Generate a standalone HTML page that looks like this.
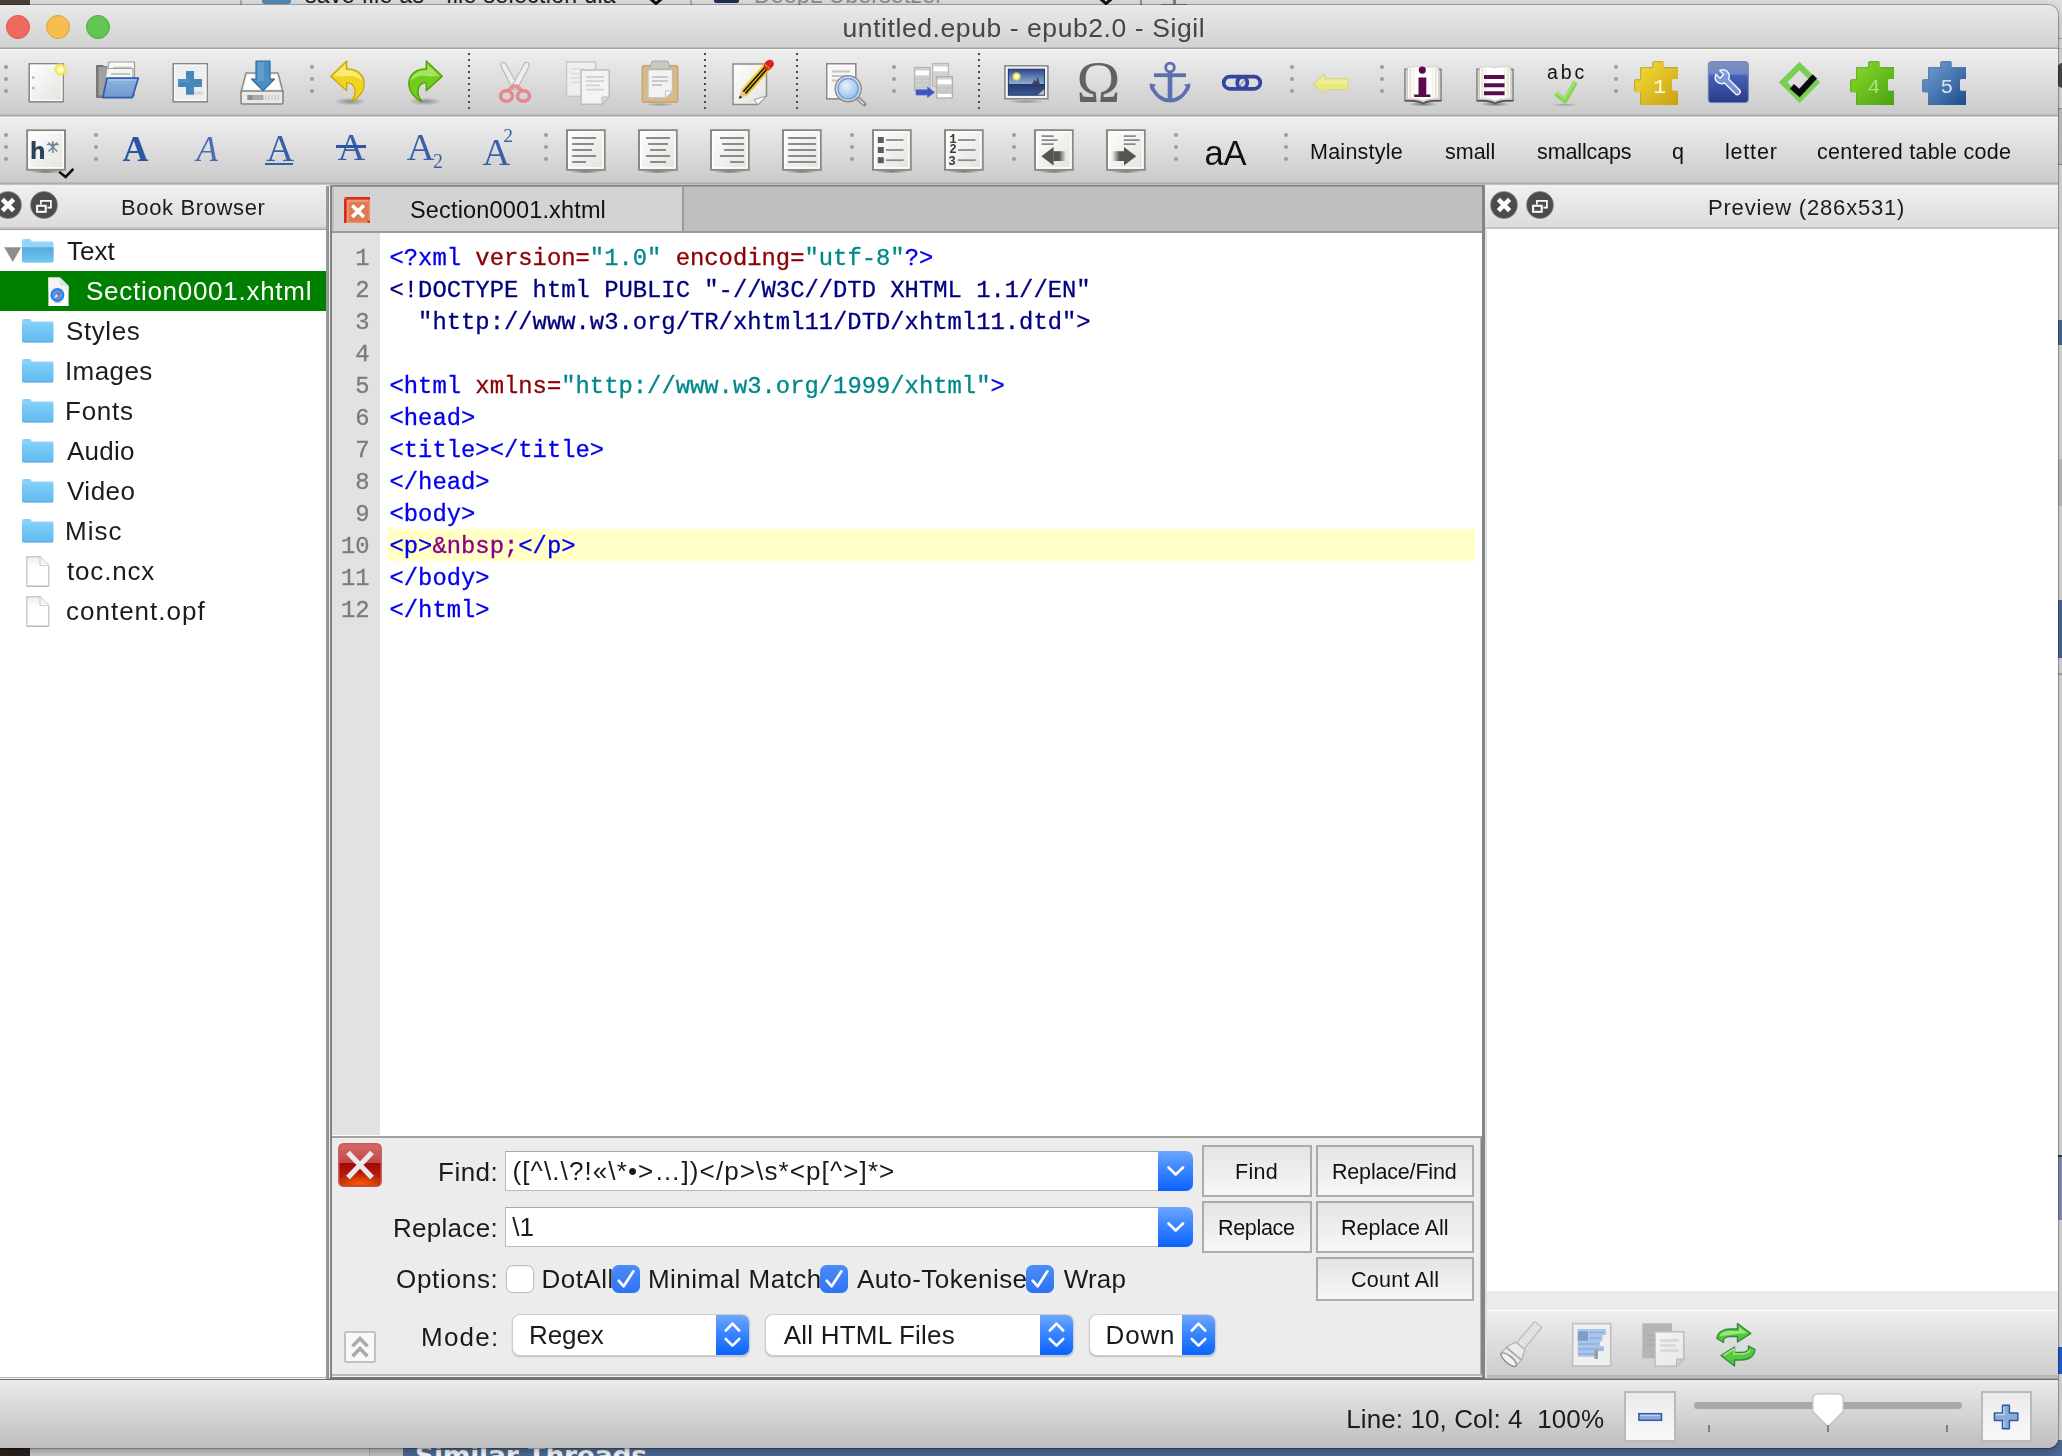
<!DOCTYPE html>
<html lang="en">
<head>
<meta charset="utf-8">
<title>untitled.epub - epub2.0 - Sigil</title>
<style>
*{box-sizing:border-box;margin:0;padding:0}
html,body{width:2062px;height:1456px;overflow:hidden}
body{position:relative;background:#e4e4e4;font-family:"Liberation Sans","DejaVu Sans",sans-serif;color:#1a1a1a}
#bgtop,#bgbot,#bgright,#win,#in,#in div,#in svg,#bgtop div,#bgbot div,#bgright div{position:absolute}
#bgtop{left:0;top:0;width:2062px;height:6px;background:#d9d9d9;overflow:hidden;border-bottom:1px solid #9c9c9c}
#bgbot{left:0;top:1440px;width:2062px;height:16px;background:#4e6c98;overflow:hidden}
#bgright{left:2048px;top:0;width:14px;height:1456px;background:#dedede;overflow:hidden}
#win{left:-12px;top:5px;width:2070px;height:1443px;border-radius:10px;overflow:hidden;background:#ececec;box-shadow:0 0 0 1px rgba(0,0,0,.25),0 4px 10px rgba(0,0,0,.3)}
#in{left:12px;top:-5px;width:2062px;height:1456px;will-change:transform}
.t{white-space:pre}
.tbar{left:0;width:2062px;background:linear-gradient(#eeeeee,#cbcbcb)}
.hl{left:0;width:2062px;height:1px}
.hdr{background:linear-gradient(#f0f0f0,#dbdbdb)}
.btn{border:2px solid #ababab;background:linear-gradient(#e4e4e4,#f7f7f7);}
.blue{background:linear-gradient(#6ea6ff,#3b86ff 45%,#0a62ff);}
.ck{width:26px;height:26px;border-radius:6px}
.ln{font-family:"Liberation Mono","DejaVu Sans Mono",monospace;white-space:pre;-webkit-text-stroke:.300px}
</style>
</head>
<body>
<div id="bgtop">
<div style="left:0;top:0;width:30px;height:6px;background:#4a4238"></div>
<div style="left:240px;top:0;width:2px;height:6px;background:#a8a8a8"></div>
<div style="left:262px;top:-14px;width:29px;height:18px;background:#4f86b4;border-radius:3px"></div>
<div class="t" style="left:305px;top:-16px;font-size:23px;line-height:23px;color:#1a1a1a;letter-spacing:.360px">save file as - file selection dia</div>
<svg style="position:absolute;left:644px;top:0" width="24" height="6"><path d="M2 -5 L12 3.600 L22 -5" fill="none" stroke="#111" stroke-width="3"/></svg>
<div style="left:690px;top:0;width:2px;height:6px;background:#a8a8a8"></div>
<div style="left:714px;top:-16px;width:25px;height:19px;background:#1c2f56;border-radius:2px"></div>
<div class="t" style="left:754px;top:-16px;font-size:23px;line-height:23px;color:#8a8a8a;letter-spacing:.200px">DeepL Übersetzer</div>
<svg style="position:absolute;left:1094px;top:0" width="24" height="6"><path d="M2 -5 L12 3.600 L22 -5" fill="none" stroke="#111" stroke-width="3"/></svg>
<div style="left:1140px;top:0;width:2px;height:6px;background:#909090"></div>
<div style="left:1172.500px;top:0;width:3px;height:5px;background:#7c7c7c"></div>
<div style="left:1161px;top:4px;width:26px;height:1px;background:#8c8c8c"></div>
</div>
<div id="bgright">
<div style="left:0;top:38px;width:14px;height:1px;background:#aaa"></div>
<div style="left:0;top:48px;width:14px;height:1px;background:#bbb"></div>
<div style="left:9px;top:63px;width:12px;height:25px;background:#4a4a4a;border-radius:6px 0 0 6px"></div>
<div style="left:0;top:108px;width:14px;height:57px;background:#c6c6c6;border-top:1px solid #999;border-bottom:1px solid #888"></div>
<div style="left:0;top:320px;width:14px;height:25px;background:#4a6a9a"></div>
<div style="left:0;top:459px;width:14px;height:47px;background:#c2c2c2"></div>
<div style="left:0;top:600px;width:14px;height:58px;background:#4a6a9a"></div>
<div style="left:0;top:673px;width:14px;height:2px;background:#aaa"></div>
<div style="left:0;top:1155px;width:14px;height:65px;background:#8594b4;border-top:2px solid #3a3a3a"></div>
<div style="left:0;top:1347px;width:14px;height:27px;background:#1f5fe0"></div>
</div>
<div id="bgbot">
<div style="left:0;top:0;width:30px;height:16px;background:#2a2420"></div>
<div style="left:30px;top:0;width:339px;height:16px;background:#cfcfcf"></div>
<div style="left:369px;top:0;width:34px;height:16px;background:#c6c6c6;border-left:1px solid #aaa"></div>
<div class="t" style="left:415px;top:3px;font-size:26.500px;line-height:26.500px;color:#fff;font-weight:bold;font-family:'DejaVu Sans','Liberation Sans',sans-serif;letter-spacing:-.200px">Similar Threads</div>
</div>
<div id="win"><div id="in">
<div style="left:0px;top:5px;width:2062px;height:43px;background:linear-gradient(#e9e9e9,#d2d2d2)"></div><div style="left:0px;top:47px;width:2062px;height:1px;background:#bdbdbd"></div><div style="left:0px;top:48px;width:2062px;height:1px;background:#a3a3a3"></div><div style="left:6px;top:15px;width:24px;height:24px;border-radius:50%;background:#ee6a5e;border:1px solid #d8574b"></div><div style="left:46px;top:15px;width:24px;height:24px;border-radius:50%;background:#f5bf4f;border:1px solid #dba43b"></div><div style="left:86px;top:15px;width:24px;height:24px;border-radius:50%;background:#62c554;border:1px solid #4daa3f"></div><div class="t" style='left:842.50px;top:15.00px;font-size:26.5px;line-height:26.5px;color:#464646;letter-spacing:0.577px;'>untitled.epub - epub2.0 - Sigil</div><div style="left:0px;top:49px;width:2062px;height:1px;background:#fafafa"></div><div class="tbar" style="left:0px;top:50px;width:2062px;height:64px;"></div><div style="left:0px;top:114px;width:2062px;height:1px;background:#bcbcbc"></div><div style="left:0px;top:115px;width:2062px;height:1px;background:#adadad"></div><div style="left:0px;top:116px;width:2062px;height:1px;background:#c4c4c4"></div><div style="left:0px;top:117px;width:2062px;height:1px;background:#fafafa"></div><div class="tbar" style="left:0px;top:118px;width:2062px;height:64px;"></div><div style="left:0px;top:182px;width:2062px;height:1px;background:#bababa"></div><div style="left:0px;top:183px;width:2062px;height:1px;background:#adadad"></div><div style="left:0px;top:184px;width:2062px;height:1px;background:#c0c0c0"></div><div class="t" style='left:1204.50px;top:136.00px;font-size:34.5px;line-height:34.5px;color:#111;letter-spacing:-0.200px;'>aA</div><div class="t" style='left:1310.00px;top:142.00px;font-size:21.5px;line-height:21.5px;color:#111;letter-spacing:0.250px;'>Mainstyle</div><div class="t" style='left:1445.00px;top:142.00px;font-size:21.5px;line-height:21.5px;color:#111;'>small</div><div class="t" style='left:1537.00px;top:142.00px;font-size:21.5px;line-height:21.5px;color:#111;letter-spacing:-0.125px;'>smallcaps</div><div class="t" style='left:1672.00px;top:142.00px;font-size:21.5px;line-height:21.5px;color:#111;'>q</div><div class="t" style='left:1725.00px;top:142.00px;font-size:21.5px;line-height:21.5px;color:#111;letter-spacing:0.800px;'>letter</div><div class="t" style='left:1817.00px;top:142.00px;font-size:21.5px;line-height:21.5px;color:#111;letter-spacing:0.278px;'>centered table code</div><div style="left:0px;top:185px;width:2062px;height:1195px;background:#ececec"></div><div class="hdr" style="left:0px;top:185px;width:329px;height:42px;"></div><div style="left:0px;top:227px;width:329px;height:2px;background:#c6c6c6"></div><div style="left:0px;top:229px;width:329px;height:1px;background:#a0a0a0"></div><div style="left:0px;top:230px;width:326px;height:1147px;background:#fff"></div><div style="left:326px;top:186px;width:3px;height:1192px;background:linear-gradient(90deg,#a2a2a2,#8a8a8a)"></div><div style="left:0px;top:1377px;width:326px;height:1px;background:#b4b4b4"></div><div style="left:329px;top:186px;width:1px;height:1192px;background:#f2f2f2"></div><div class="t" style='left:121.00px;top:197.00px;font-size:22px;line-height:22px;color:#1c1c1c;letter-spacing:0.636px;'>Book Browser</div><div style="left:0px;top:271px;width:326px;height:40px;background:#008000"></div><div class="t" style='left:67.00px;top:238.00px;font-size:26px;line-height:26px;color:#1c1c1c;'>Text</div><div class="t" style='left:86.00px;top:278.00px;font-size:26px;line-height:26px;color:#fff;letter-spacing:0.719px;'>Section0001.xhtml</div><div class="t" style='left:66.00px;top:318.00px;font-size:26px;line-height:26px;color:#1c1c1c;letter-spacing:0.600px;'>Styles</div><div class="t" style='left:65.00px;top:358.00px;font-size:26px;line-height:26px;color:#1c1c1c;letter-spacing:0.400px;'>Images</div><div class="t" style='left:65.00px;top:398.00px;font-size:26px;line-height:26px;color:#1c1c1c;letter-spacing:0.750px;'>Fonts</div><div class="t" style='left:67.00px;top:438.00px;font-size:26px;line-height:26px;color:#1c1c1c;letter-spacing:0.250px;'>Audio</div><div class="t" style='left:67.00px;top:478.00px;font-size:26px;line-height:26px;color:#1c1c1c;letter-spacing:0.500px;'>Video</div><div class="t" style='left:65.00px;top:518.00px;font-size:26px;line-height:26px;color:#1c1c1c;letter-spacing:1.000px;'>Misc</div><div class="t" style='left:67.00px;top:558.00px;font-size:26px;line-height:26px;color:#1c1c1c;letter-spacing:0.833px;'>toc.ncx</div><div class="t" style='left:66.00px;top:598.00px;font-size:26px;line-height:26px;color:#1c1c1c;letter-spacing:1.000px;'>content.opf</div><div style="left:330px;top:185px;width:1155px;height:1195px;background:#848484"></div><div style="left:332px;top:187px;width:1150px;height:44px;background:#bfbfbf"></div><div style="left:332px;top:186px;width:1150px;height:1px;background:#9a9a9a"></div><div style="left:334px;top:187px;width:350px;height:44px;background:#d3d3d3;border-right:2px solid #9b9b9b"></div><div style="left:332px;top:231px;width:1150px;height:2px;background:#9b9b9b"></div><div style="left:332px;top:233px;width:1150px;height:902px;background:#fff"></div><div style="left:332px;top:233px;width:48px;height:902px;background:#e2e2e2"></div><div class="t" style='left:410.00px;top:199.00px;font-size:23.5px;line-height:23.5px;color:#111;letter-spacing:0.156px;'>Section0001.xhtml</div><div style="left:388px;top:529px;width:1087px;height:32px;background:#ffffc6"></div><div class="ln" style="left:389.5px;top:242.5px;font-size:23.85px;line-height:32px;height:32px"><span style="color:#0000ee">&lt;?xml </span><span style="color:#8b0000">version=</span><span style="color:#00888a">"1.0"</span><span style="color:#8b0000"> encoding=</span><span style="color:#00888a">"utf-8"</span><span style="color:#0000ee">?&gt;</span></div><div class="ln" style="left:333px;width:36.6px;text-align:right;top:242.5px;font-size:23.85px;line-height:32px;height:32px;color:#7c7c7c">1</div><div class="ln" style="left:389.5px;top:274.5px;font-size:23.85px;line-height:32px;height:32px"><span style="color:#000080">&lt;!DOCTYPE html PUBLIC "-//W3C//DTD XHTML 1.1//EN"</span></div><div class="ln" style="left:333px;width:36.6px;text-align:right;top:274.5px;font-size:23.85px;line-height:32px;height:32px;color:#7c7c7c">2</div><div class="ln" style="left:389.5px;top:306.5px;font-size:23.85px;line-height:32px;height:32px"><span style="color:#000080">  "http://www.w3.org/TR/xhtml11/DTD/xhtml11.dtd"&gt;</span></div><div class="ln" style="left:333px;width:36.6px;text-align:right;top:306.5px;font-size:23.85px;line-height:32px;height:32px;color:#7c7c7c">3</div><div class="ln" style="left:389.5px;top:338.5px;font-size:23.85px;line-height:32px;height:32px"></div><div class="ln" style="left:333px;width:36.6px;text-align:right;top:338.5px;font-size:23.85px;line-height:32px;height:32px;color:#7c7c7c">4</div><div class="ln" style="left:389.5px;top:370.5px;font-size:23.85px;line-height:32px;height:32px"><span style="color:#0000ee">&lt;html </span><span style="color:#8b0000">xmlns=</span><span style="color:#00888a">"http://www.w3.org/1999/xhtml"</span><span style="color:#0000ee">&gt;</span></div><div class="ln" style="left:333px;width:36.6px;text-align:right;top:370.5px;font-size:23.85px;line-height:32px;height:32px;color:#7c7c7c">5</div><div class="ln" style="left:389.5px;top:402.5px;font-size:23.85px;line-height:32px;height:32px"><span style="color:#0000ee">&lt;head&gt;</span></div><div class="ln" style="left:333px;width:36.6px;text-align:right;top:402.5px;font-size:23.85px;line-height:32px;height:32px;color:#7c7c7c">6</div><div class="ln" style="left:389.5px;top:434.5px;font-size:23.85px;line-height:32px;height:32px"><span style="color:#0000ee">&lt;title&gt;&lt;/title&gt;</span></div><div class="ln" style="left:333px;width:36.6px;text-align:right;top:434.5px;font-size:23.85px;line-height:32px;height:32px;color:#7c7c7c">7</div><div class="ln" style="left:389.5px;top:466.5px;font-size:23.85px;line-height:32px;height:32px"><span style="color:#0000ee">&lt;/head&gt;</span></div><div class="ln" style="left:333px;width:36.6px;text-align:right;top:466.5px;font-size:23.85px;line-height:32px;height:32px;color:#7c7c7c">8</div><div class="ln" style="left:389.5px;top:498.5px;font-size:23.85px;line-height:32px;height:32px"><span style="color:#0000ee">&lt;body&gt;</span></div><div class="ln" style="left:333px;width:36.6px;text-align:right;top:498.5px;font-size:23.85px;line-height:32px;height:32px;color:#7c7c7c">9</div><div class="ln" style="left:389.5px;top:530.5px;font-size:23.85px;line-height:32px;height:32px"><span style="color:#0000ee">&lt;p&gt;</span><span style="color:#8b008b">&amp;nbsp;</span><span style="color:#0000ee">&lt;/p&gt;</span></div><div class="ln" style="left:333px;width:36.6px;text-align:right;top:530.5px;font-size:23.85px;line-height:32px;height:32px;color:#7c7c7c">10</div><div class="ln" style="left:389.5px;top:562.5px;font-size:23.85px;line-height:32px;height:32px"><span style="color:#0000ee">&lt;/body&gt;</span></div><div class="ln" style="left:333px;width:36.6px;text-align:right;top:562.5px;font-size:23.85px;line-height:32px;height:32px;color:#7c7c7c">11</div><div class="ln" style="left:389.5px;top:594.5px;font-size:23.85px;line-height:32px;height:32px"><span style="color:#0000ee">&lt;/html&gt;</span></div><div class="ln" style="left:333px;width:36.6px;text-align:right;top:594.5px;font-size:23.85px;line-height:32px;height:32px;color:#7c7c7c">12</div><div style="left:332px;top:1135px;width:1150px;height:2px;background:#fff"></div><div style="left:332px;top:1136px;width:1150px;height:2px;background:#a2a2a2"></div><div style="left:332px;top:1138px;width:1149px;height:237px;background:#ececec"></div><div style="left:1480px;top:1138px;width:1px;height:237px;background:#b5b5b5"></div><div style="left:332px;top:1374px;width:1150px;height:2px;background:#b9b9b9"></div><div style="left:332px;top:1376px;width:1150px;height:1px;background:#f4f4f4"></div><div class="t" style='left:438.00px;top:1159.00px;font-size:26px;line-height:26px;color:#1a1a1a;letter-spacing:0.500px;'>Find:</div><div class="t" style='left:393.00px;top:1215.00px;font-size:26px;line-height:26px;color:#1a1a1a;letter-spacing:0.286px;'>Replace:</div><div class="t" style='left:396.00px;top:1266.00px;font-size:26px;line-height:26px;color:#1a1a1a;letter-spacing:0.714px;'>Options:</div><div class="t" style='left:421.00px;top:1324.00px;font-size:26px;line-height:26px;color:#1a1a1a;letter-spacing:1.250px;'>Mode:</div><div style="left:505px;top:1151px;width:660px;height:40px;background:#fff;border:1px solid #b9b9b9;border-top-color:#a9a9a9"></div><div class="blue" style="left:1158px;top:1151px;width:35px;height:40px;border-radius:0 7px 7px 0"></div><svg style="left:1158px;top:1151px" width="35" height="40"><path d="M10.5 16.5 L17.7 23.5 L25 16.5" fill="none" stroke="#fff" stroke-width="2.6" stroke-linecap="round" stroke-linejoin="round"/></svg><div style="left:505px;top:1207px;width:660px;height:40px;background:#fff;border:1px solid #b9b9b9;border-top-color:#a9a9a9"></div><div class="blue" style="left:1158px;top:1207px;width:35px;height:40px;border-radius:0 7px 7px 0"></div><svg style="left:1158px;top:1207px" width="35" height="40"><path d="M10.5 16.5 L17.7 23.5 L25 16.5" fill="none" stroke="#fff" stroke-width="2.6" stroke-linecap="round" stroke-linejoin="round"/></svg><div class="t" style='left:512.50px;top:1158.00px;font-size:26px;line-height:26px;color:#1a1a1a;letter-spacing:1.107px;'>([^\.\?!«\*•&gt;…])&lt;/p&gt;\s*&lt;p[^&gt;]*&gt;</div><div class="t" style='left:512.30px;top:1214.00px;font-size:26px;line-height:26px;color:#1a1a1a;'>\1</div><div class="btn" style="left:1202px;top:1145px;width:110px;height:52px;"></div><div class="t" style='left:1235.00px;top:1162.00px;font-size:21.5px;line-height:21.5px;color:#111;letter-spacing:0.333px;'>Find</div><div class="btn" style="left:1316px;top:1145px;width:158px;height:52px;"></div><div class="t" style='left:1332.00px;top:1162.00px;font-size:21.5px;line-height:21.5px;color:#111;letter-spacing:-0.182px;'>Replace/Find</div><div class="btn" style="left:1202px;top:1201px;width:110px;height:52px;"></div><div class="t" style='left:1218.00px;top:1218.00px;font-size:21.5px;line-height:21.5px;color:#111;letter-spacing:-0.333px;'>Replace</div><div class="btn" style="left:1316px;top:1201px;width:158px;height:52px;"></div><div class="t" style='left:1341.00px;top:1218.00px;font-size:21.5px;line-height:21.5px;color:#111;'>Replace All</div><div class="btn" style="left:1316px;top:1257px;width:158px;height:44px;"></div><div class="t" style='left:1351.00px;top:1270.00px;font-size:21.5px;line-height:21.5px;color:#111;letter-spacing:0.250px;'>Count All</div><div style="left:506.3px;top:1265.3px;width:27.5px;height:27.5px;border-radius:6.500px;background:#fff;border:1px solid #b9b9b9;box-shadow:inset 0 1px 1px rgba(0,0,0,.06)"></div><div style="left:612.3px;top:1265.3px;width:27.8px;height:27.5px;border-radius:6.500px;background:linear-gradient(#4b8df8,#2f72f2)"></div><svg style="left:612.3px;top:1265.300px" width="28" height="28"><path d="M6.700 15.700 L11.700 21.300 L21.400 6.300" fill="none" stroke="#fff" stroke-width="2.700" stroke-linecap="round" stroke-linejoin="round"/></svg><div style="left:820px;top:1265.3px;width:27.8px;height:27.5px;border-radius:6.500px;background:linear-gradient(#4b8df8,#2f72f2)"></div><svg style="left:820px;top:1265.300px" width="28" height="28"><path d="M6.700 15.700 L11.700 21.300 L21.400 6.300" fill="none" stroke="#fff" stroke-width="2.700" stroke-linecap="round" stroke-linejoin="round"/></svg><div style="left:1026.2px;top:1265.3px;width:27.8px;height:27.5px;border-radius:6.500px;background:linear-gradient(#4b8df8,#2f72f2)"></div><svg style="left:1026.2px;top:1265.300px" width="28" height="28"><path d="M6.700 15.700 L11.700 21.300 L21.400 6.300" fill="none" stroke="#fff" stroke-width="2.700" stroke-linecap="round" stroke-linejoin="round"/></svg><div class="t" style='left:541.60px;top:1266.00px;font-size:26px;line-height:26px;color:#1a1a1a;letter-spacing:0.480px;'>DotAll</div><div class="t" style='left:647.90px;top:1266.00px;font-size:26px;line-height:26px;color:#1a1a1a;letter-spacing:0.483px;'>Minimal Match</div><div class="t" style='left:857.00px;top:1266.00px;font-size:26px;line-height:26px;color:#1a1a1a;letter-spacing:0.442px;'>Auto-Tokenise</div><div class="t" style='left:1063.70px;top:1266.00px;font-size:26px;line-height:26px;color:#1a1a1a;letter-spacing:0.200px;'>Wrap</div><div style="left:513.4px;top:1315.4px;width:235.7px;height:39.6px;border-radius:7px;background:#fff;box-shadow:0 0 0 1px #cdcdcd,0 1.500px 1.500px .500px #bdbdbd"></div><div class="blue" style="left:716.0999999999999px;top:1315px;width:33.4px;height:40.2px;border-radius:0 7px 7px 0"></div><svg style="left:716.0999999999999px;top:1315px" width="34" height="41"><path d="M9.800 15.500 L16.500 8.700 L23.200 15.500 M9.800 24 L16.500 30.700 L23.200 24" fill="none" stroke="#fff" stroke-width="2.600" stroke-linecap="round" stroke-linejoin="round"/></svg><div class="t" style='left:529.10px;top:1322.00px;font-size:26px;line-height:26px;color:#1a1a1a;letter-spacing:-0.125px;'>Regex</div><div style="left:765.6px;top:1315.4px;width:307.3px;height:39.6px;border-radius:7px;background:#fff;box-shadow:0 0 0 1px #cdcdcd,0 1.500px 1.500px .500px #bdbdbd"></div><div class="blue" style="left:1039.9px;top:1315px;width:33.4px;height:40.2px;border-radius:0 7px 7px 0"></div><svg style="left:1039.9px;top:1315px" width="34" height="41"><path d="M9.800 15.500 L16.500 8.700 L23.200 15.500 M9.800 24 L16.500 30.700 L23.200 24" fill="none" stroke="#fff" stroke-width="2.600" stroke-linecap="round" stroke-linejoin="round"/></svg><div class="t" style='left:783.70px;top:1322.00px;font-size:26px;line-height:26px;color:#1a1a1a;letter-spacing:0.231px;'>All HTML Files</div><div style="left:1089.6px;top:1315.4px;width:125px;height:39.6px;border-radius:7px;background:#fff;box-shadow:0 0 0 1px #cdcdcd,0 1.500px 1.500px .500px #bdbdbd"></div><div class="blue" style="left:1181.6px;top:1315px;width:33.4px;height:40.2px;border-radius:0 7px 7px 0"></div><svg style="left:1181.6px;top:1315px" width="34" height="41"><path d="M9.800 15.500 L16.500 8.700 L23.200 15.500 M9.800 24 L16.500 30.700 L23.200 24" fill="none" stroke="#fff" stroke-width="2.600" stroke-linecap="round" stroke-linejoin="round"/></svg><div class="t" style='left:1105.50px;top:1322.00px;font-size:26px;line-height:26px;color:#1a1a1a;letter-spacing:0.867px;'>Down</div><div class="hdr" style="left:1485px;top:185px;width:577px;height:42px;"></div><div style="left:1485px;top:227px;width:577px;height:2px;background:#c6c6c6"></div><div style="left:1487px;top:229px;width:575px;height:1062px;background:#fff"></div><div style="left:1485px;top:229px;width:2px;height:1150px;background:#e0e0e0"></div><div style="left:1487px;top:1291px;width:575px;height:20px;background:#ebebeb"></div><div style="left:1487px;top:1310px;width:575px;height:1px;background:#fafafa"></div><div style="left:1487px;top:1311px;width:575px;height:64px;background:linear-gradient(#eeeeee,#cdcdcd)"></div><div style="left:1487px;top:1375px;width:575px;height:3px;background:#b8b8b8"></div><div class="t" style='left:1708.00px;top:197.00px;font-size:22px;line-height:22px;color:#1c1c1c;letter-spacing:0.812px;'>Preview (286x531)</div><div style="left:0px;top:1378px;width:326px;height:1px;background:#f2f2f2"></div><div style="left:326px;top:1378px;width:4px;height:1px;background:#9a9a9a"></div><div style="left:330px;top:1377px;width:1155px;height:2px;background:#767676"></div><div style="left:1485px;top:1378px;width:577px;height:1px;background:#a4a4a4"></div><div style="left:0px;top:1379px;width:2062px;height:1px;background:#6c6c6c"></div><div style="left:0px;top:1380px;width:2062px;height:70px;background:linear-gradient(#ebebeb,#bcbcbc)"></div><div class="t" style='left:1346.30px;top:1406.00px;font-size:26px;line-height:26px;color:#1c1c1c;letter-spacing:0.090px;'>Line: 10, Col: 4  100%</div><svg width="0" height="0" style="left:0;top:0"><defs>
<linearGradient id="gPaper" x1="0" y1="0" x2="1" y2="1"><stop offset="0" stop-color="#ffffff"/><stop offset="1" stop-color="#e2e2de"/></linearGradient>
<linearGradient id="gPaperD" x1="0" y1="0" x2="1" y2="1"><stop offset="0" stop-color="#f6f6f6"/><stop offset="1" stop-color="#e6e6e6"/></linearGradient>
<linearGradient id="gFolder" x1="0" y1="0" x2="0" y2="1"><stop offset="0" stop-color="#8fb4e0"/><stop offset="1" stop-color="#6f98d0"/></linearGradient>
<linearGradient id="gYel" x1="0" y1="0" x2="1" y2="1"><stop offset="0" stop-color="#f6e23a"/><stop offset="1" stop-color="#c9a010"/></linearGradient>
<linearGradient id="gGrn" x1="0" y1="0" x2="1" y2="1"><stop offset="0" stop-color="#8ae02c"/><stop offset="1" stop-color="#4aa010"/></linearGradient>
<linearGradient id="gBlu" x1="0" y1="0" x2="1" y2="1"><stop offset="0" stop-color="#78a4d8"/><stop offset="1" stop-color="#1c4c8c"/></linearGradient>
<linearGradient id="gWr" x1="0" y1="0" x2="0" y2="1"><stop offset="0" stop-color="#8090bc"/><stop offset=".3" stop-color="#6f86c4"/><stop offset=".34" stop-color="#4463b8"/><stop offset="1" stop-color="#2a3888"/></linearGradient>
<linearGradient id="gSky" x1="0" y1="0" x2="0" y2="1"><stop offset="0" stop-color="#2c4a8c"/><stop offset=".55" stop-color="#8ea8d4"/><stop offset=".56" stop-color="#22376a"/><stop offset="1" stop-color="#3c5a96"/></linearGradient>
<linearGradient id="gFadeL" x1="0" y1="0" x2="1" y2="0"><stop offset="0" stop-color="#555650"/><stop offset=".45" stop-color="#555650"/><stop offset="1" stop-color="#555650" stop-opacity="0"/></linearGradient>
<linearGradient id="gFadeR" x1="1" y1="0" x2="0" y2="0"><stop offset="0" stop-color="#555650"/><stop offset=".45" stop-color="#555650"/><stop offset="1" stop-color="#555650" stop-opacity="0"/></linearGradient>
<linearGradient id="gFold" x1="0" y1="0" x2="0" y2="1"><stop offset="0" stop-color="#86d2f9"/><stop offset="1" stop-color="#62baef"/></linearGradient>
<radialGradient id="gShadow" cx=".5" cy=".5" r=".5"><stop offset="0" stop-color="#000" stop-opacity=".45"/><stop offset="1" stop-color="#000" stop-opacity="0"/></radialGradient>
<radialGradient id="gGlow" cx=".5" cy=".5" r=".5"><stop offset="0" stop-color="#fffef0"/><stop offset=".35" stop-color="#fffbb0"/><stop offset=".7" stop-color="#f2e04a" stop-opacity=".9"/><stop offset="1" stop-color="#f2e04a" stop-opacity="0"/></radialGradient>
<radialGradient id="gLens" cx=".4" cy=".35" r=".7"><stop offset="0" stop-color="#e8f2fc"/><stop offset="1" stop-color="#8fbcee"/></radialGradient>
<linearGradient id="gRedX" x1="0" y1="0" x2="0" y2="1"><stop offset="0" stop-color="#d86868"/><stop offset=".45" stop-color="#c04848"/><stop offset=".46" stop-color="#a00808"/><stop offset="1" stop-color="#c83010"/></linearGradient>
<radialGradient id="gRedGlow" cx=".5" cy="1" r=".6"><stop offset="0" stop-color="#ff5a00"/><stop offset="1" stop-color="#ff5a00" stop-opacity="0"/></radialGradient>
</defs></svg><svg style="left:2.8px;top:64px;" width="6" height="30" viewBox="0 0 6 30"><circle cx="3" cy="3" r="2" fill="#9c9c9c"/><circle cx="3" cy="15" r="2" fill="#9c9c9c"/><circle cx="3" cy="27" r="2" fill="#9c9c9c"/></svg><svg style="left:308.8px;top:64px;" width="6" height="30" viewBox="0 0 6 30"><circle cx="3" cy="3" r="2" fill="#9c9c9c"/><circle cx="3" cy="15" r="2" fill="#9c9c9c"/><circle cx="3" cy="27" r="2" fill="#9c9c9c"/></svg><svg style="left:890.8px;top:64px;" width="6" height="30" viewBox="0 0 6 30"><circle cx="3" cy="3" r="2" fill="#9c9c9c"/><circle cx="3" cy="15" r="2" fill="#9c9c9c"/><circle cx="3" cy="27" r="2" fill="#9c9c9c"/></svg><svg style="left:1288.8px;top:64px;" width="6" height="30" viewBox="0 0 6 30"><circle cx="3" cy="3" r="2" fill="#9c9c9c"/><circle cx="3" cy="15" r="2" fill="#9c9c9c"/><circle cx="3" cy="27" r="2" fill="#9c9c9c"/></svg><svg style="left:1378.8px;top:64px;" width="6" height="30" viewBox="0 0 6 30"><circle cx="3" cy="3" r="2" fill="#9c9c9c"/><circle cx="3" cy="15" r="2" fill="#9c9c9c"/><circle cx="3" cy="27" r="2" fill="#9c9c9c"/></svg><svg style="left:1613px;top:64px;" width="6" height="30" viewBox="0 0 6 30"><circle cx="3" cy="3" r="2" fill="#9c9c9c"/><circle cx="3" cy="15" r="2" fill="#9c9c9c"/><circle cx="3" cy="27" r="2" fill="#9c9c9c"/></svg><svg style="left:2.8px;top:132px;" width="6" height="30" viewBox="0 0 6 30"><circle cx="3" cy="3" r="2" fill="#9c9c9c"/><circle cx="3" cy="15" r="2" fill="#9c9c9c"/><circle cx="3" cy="27" r="2" fill="#9c9c9c"/></svg><svg style="left:93px;top:132px;" width="6" height="30" viewBox="0 0 6 30"><circle cx="3" cy="3" r="2" fill="#9c9c9c"/><circle cx="3" cy="15" r="2" fill="#9c9c9c"/><circle cx="3" cy="27" r="2" fill="#9c9c9c"/></svg><svg style="left:542.9px;top:132px;" width="6" height="30" viewBox="0 0 6 30"><circle cx="3" cy="3" r="2" fill="#9c9c9c"/><circle cx="3" cy="15" r="2" fill="#9c9c9c"/><circle cx="3" cy="27" r="2" fill="#9c9c9c"/></svg><svg style="left:848.9px;top:132px;" width="6" height="30" viewBox="0 0 6 30"><circle cx="3" cy="3" r="2" fill="#9c9c9c"/><circle cx="3" cy="15" r="2" fill="#9c9c9c"/><circle cx="3" cy="27" r="2" fill="#9c9c9c"/></svg><svg style="left:1010.6px;top:132px;" width="6" height="30" viewBox="0 0 6 30"><circle cx="3" cy="3" r="2" fill="#9c9c9c"/><circle cx="3" cy="15" r="2" fill="#9c9c9c"/><circle cx="3" cy="27" r="2" fill="#9c9c9c"/></svg><svg style="left:1172.8px;top:132px;" width="6" height="30" viewBox="0 0 6 30"><circle cx="3" cy="3" r="2" fill="#9c9c9c"/><circle cx="3" cy="15" r="2" fill="#9c9c9c"/><circle cx="3" cy="27" r="2" fill="#9c9c9c"/></svg><svg style="left:1282.8px;top:132px;" width="6" height="30" viewBox="0 0 6 30"><circle cx="3" cy="3" r="2" fill="#9c9c9c"/><circle cx="3" cy="15" r="2" fill="#9c9c9c"/><circle cx="3" cy="27" r="2" fill="#9c9c9c"/></svg><svg style="left:468px;top:53px;" width="2" height="58" viewBox="0 0 2 58"><rect x="0" y="0" width="2" height="2" fill="#4c4c4c"/><rect x="0" y="6" width="2" height="2" fill="#4c4c4c"/><rect x="0" y="12" width="2" height="2" fill="#4c4c4c"/><rect x="0" y="18" width="2" height="2" fill="#4c4c4c"/><rect x="0" y="24" width="2" height="2" fill="#4c4c4c"/><rect x="0" y="30" width="2" height="2" fill="#4c4c4c"/><rect x="0" y="36" width="2" height="2" fill="#4c4c4c"/><rect x="0" y="42" width="2" height="2" fill="#4c4c4c"/><rect x="0" y="48" width="2" height="2" fill="#4c4c4c"/><rect x="0" y="54" width="2" height="2" fill="#4c4c4c"/></svg><svg style="left:704px;top:53px;" width="2" height="58" viewBox="0 0 2 58"><rect x="0" y="0" width="2" height="2" fill="#4c4c4c"/><rect x="0" y="6" width="2" height="2" fill="#4c4c4c"/><rect x="0" y="12" width="2" height="2" fill="#4c4c4c"/><rect x="0" y="18" width="2" height="2" fill="#4c4c4c"/><rect x="0" y="24" width="2" height="2" fill="#4c4c4c"/><rect x="0" y="30" width="2" height="2" fill="#4c4c4c"/><rect x="0" y="36" width="2" height="2" fill="#4c4c4c"/><rect x="0" y="42" width="2" height="2" fill="#4c4c4c"/><rect x="0" y="48" width="2" height="2" fill="#4c4c4c"/><rect x="0" y="54" width="2" height="2" fill="#4c4c4c"/></svg><svg style="left:796px;top:53px;" width="2" height="58" viewBox="0 0 2 58"><rect x="0" y="0" width="2" height="2" fill="#4c4c4c"/><rect x="0" y="6" width="2" height="2" fill="#4c4c4c"/><rect x="0" y="12" width="2" height="2" fill="#4c4c4c"/><rect x="0" y="18" width="2" height="2" fill="#4c4c4c"/><rect x="0" y="24" width="2" height="2" fill="#4c4c4c"/><rect x="0" y="30" width="2" height="2" fill="#4c4c4c"/><rect x="0" y="36" width="2" height="2" fill="#4c4c4c"/><rect x="0" y="42" width="2" height="2" fill="#4c4c4c"/><rect x="0" y="48" width="2" height="2" fill="#4c4c4c"/><rect x="0" y="54" width="2" height="2" fill="#4c4c4c"/></svg><svg style="left:978px;top:53px;" width="2" height="58" viewBox="0 0 2 58"><rect x="0" y="0" width="2" height="2" fill="#4c4c4c"/><rect x="0" y="6" width="2" height="2" fill="#4c4c4c"/><rect x="0" y="12" width="2" height="2" fill="#4c4c4c"/><rect x="0" y="18" width="2" height="2" fill="#4c4c4c"/><rect x="0" y="24" width="2" height="2" fill="#4c4c4c"/><rect x="0" y="30" width="2" height="2" fill="#4c4c4c"/><rect x="0" y="36" width="2" height="2" fill="#4c4c4c"/><rect x="0" y="42" width="2" height="2" fill="#4c4c4c"/><rect x="0" y="48" width="2" height="2" fill="#4c4c4c"/><rect x="0" y="54" width="2" height="2" fill="#4c4c4c"/></svg><svg style="left:27px;top:61px;" width="40" height="44" viewBox="0 0 40 44"><rect x="2.2" y="2.8" width="34" height="38" fill="url(#gPaper)" stroke="#8b8b85" stroke-width="1.6"/>
<rect x="3.6" y="4.2" width="31.2" height="35.2" fill="none" stroke="#fff" stroke-width="1.2"/>
<rect x="5" y="15.400" width="2.400" height="2.400" fill="#b5b5b0"/><rect x="5" y="25.800" width="2.400" height="2.400" fill="#b5b5b0"/>
<circle cx="33.6" cy="8.6" r="7.2" fill="url(#gGlow)"/></svg><svg style="left:94px;top:59px;" width="50" height="44" viewBox="0 0 50 44"><path d="M2.600 6.500 L2.600 38.500 L9 38.500 L9 6.500 Z" fill="#8a8a88" stroke="#6e6e6c" stroke-width="1"/>
<path d="M4 7.500 L12 7.500 L14 10 L40 10 L40 37 L4 37 Z" fill="#a0a09c" stroke="#77777a" stroke-width="1.200"/>
<path d="M15 3 L40.5 3 L40.5 24 L11 24 Z" fill="#fafafa" stroke="#9a9a96" stroke-width="1.2"/>
<rect x="19" y="7.6" width="19" height="2" fill="#c4c4c0"/>
<path d="M13 9.5 L39 9.5 L39 26 L10.5 26 Z" fill="#f4f4f2" stroke="#a2a29e" stroke-width="1.1"/>
<rect x="17" y="14" width="19" height="2" fill="#c4c4c0"/>
<path d="M12.900 19.200 L44.300 19.200 L38.300 38.600 L8.800 38.600 Z" fill="url(#gFolder)" stroke="#2f5cad" stroke-width="1.700" stroke-linejoin="round"/>
<path d="M14.500 21 L42.500 21" stroke="#b4ccee" stroke-width="1.200"/></svg><svg style="left:171px;top:61px;" width="40" height="44" viewBox="0 0 40 44"><rect x="2.2" y="2.8" width="34" height="38" fill="#eceef0" stroke="#8b8b85" stroke-width="1.6"/>
<rect x="3.6" y="4.2" width="31.2" height="35.2" fill="none" stroke="#fbfbfb" stroke-width="1.2"/>
<rect x="22" y="30.6" width="10" height="3" fill="#d5d5d5"/>
<path d="M15 10.100 H23 V18 H30.900 V26.100 H23 V33.700 H15 V26.100 H7.100 V18 H15 Z" fill="#4487b8"/>
<path d="M15 10.100 H19 V18 H7.100 V22 H19 V10.100 Z" fill="#5b9ccb" opacity=".45"/></svg><svg style="left:238px;top:59px;" width="48" height="48" viewBox="0 0 48 48"><path d="M8 14 L40 14 L45 33 L3 33 Z" fill="#f2f2f2" stroke="#8b8b87" stroke-width="1.5" stroke-linejoin="round"/>
<path d="M9.5 16 L38.5 16 L42 30 L6 30 Z" fill="#fdfdfd"/>
<rect x="3" y="32" width="42" height="13" rx="1.5" fill="#e9e9e9" stroke="#858581" stroke-width="1.6"/>
<rect x="9.5" y="36" width="16" height="5" fill="#a9a9a9"/>
<rect x="9.5" y="36" width="5" height="5" fill="#8e8e8e"/>
<path d="M28 36 V41 M31 36 V41 M34 36 V41 M37 36 V41 M40 36 V41" stroke="#c4c4c4" stroke-width="1.2"/>
<path d="M18 2 H32 V20 H36.5 L25 31.5 L13.5 20 H18 Z" fill="#4a8fc4" stroke="#2f6a9c" stroke-width="1.2" stroke-linejoin="round"/>
<path d="M19.5 3 H26 V22 H19.5 Z" fill="#74acd8" opacity=".55"/></svg><svg style="left:328px;top:59px;" width="42" height="48" viewBox="0 0 42 48"><ellipse cx="22" cy="42.500" rx="16" ry="4" fill="url(#gShadow)" opacity=".75"/>
<path d="M2.700 17.200 L18.700 1.900 L18.700 9.900 C28 9.500 36.200 15 36.200 24.500 C36.200 32 31 39 23.100 42.600 C26.200 38.800 27.800 34.500 26.800 30 C25.800 26 22.800 23.600 18.700 23.600 L18.700 31.700 Z" fill="#f0d520" stroke="#c9a900" stroke-width="1.300" stroke-linejoin="round"/>
<path d="M5.500 17 L17.400 5.600 L17.400 11.300 C26 10.800 33 15 34.400 22 C29 16.200 22 15.800 15 17.600 Z" fill="#fbf29a" opacity=".75"/></svg><svg style="left:404.7px;top:59px;" width="42" height="48" viewBox="0 0 42 48"><ellipse cx="20" cy="42.500" rx="16" ry="4" fill="url(#gShadow)" opacity=".75"/>
<g transform="translate(40 0) scale(-1 1)"><path d="M2.700 17.200 L18.700 1.900 L18.700 9.900 C28 9.500 36.200 15 36.200 24.500 C36.200 32 31 39 23.100 42.600 C26.200 38.800 27.800 34.500 26.800 30 C25.800 26 22.800 23.600 18.700 23.600 L18.700 31.700 Z" fill="#72cc1c" stroke="#4aa000" stroke-width="1.300" stroke-linejoin="round"/>
<path d="M5.500 17 L17.400 5.600 L17.400 11.300 C26 10.800 33 15 34.400 22 C29 16.200 22 15.800 15 17.600 Z" fill="#b8f078" opacity=".7"/></g></svg><svg style="left:496px;top:59px;" width="40" height="48" viewBox="0 0 40 48"><path d="M6.500 3.500 C5 4 4.500 6 5.500 8.500 L17.500 31 L22 27 L9.500 4.500 C8.500 3.200 7.500 3.100 6.500 3.500 Z" fill="#ededed" stroke="#bcbcbc" stroke-width="1.300"/>
<path d="M31.500 3.500 C33 4 33.500 6 32.500 8.500 L20.500 31 L16 27 L28.500 4.500 C29.500 3.200 30.500 3.100 31.500 3.500 Z" fill="#efefef" stroke="#bcbcbc" stroke-width="1.300"/>
<path d="M17.500 27 L12.500 31.500 M20.500 27 L25.500 31.500" stroke="#e69292" stroke-width="3.800" stroke-linecap="round"/>
<ellipse cx="10.500" cy="37" rx="6" ry="5.200" fill="none" stroke="#e28a8a" stroke-width="3.600"/>
<ellipse cx="27.500" cy="37" rx="6" ry="5.200" fill="none" stroke="#e28a8a" stroke-width="3.600"/></svg><svg style="left:564px;top:59px;" width="48" height="48" viewBox="0 0 48 48"><rect x="2.600" y="2.800" width="29" height="34.500" fill="#efefef" stroke="#c6c6c6" stroke-width="1.400"/>
<path d="M7 10 H20 M7 14.500 H20 M7 19 H20 M7 23.500 H18" stroke="#dcdcdc" stroke-width="1.600"/>
<path d="M17 11 H45.200 V38 L38 45.200 H17 Z" fill="#f3f3f3" stroke="#bdbdbd" stroke-width="1.500"/>
<path d="M45 38 L38 38 L38 45 Z" fill="#d8d8d8" stroke="#bdbdbd" stroke-width="1"/>
<path d="M22 18 H40 M22 22.200 H40 M22 26.400 H36 M22 30.600 H40" stroke="#d2d2d2" stroke-width="1.800"/></svg><svg style="left:640px;top:59px;" width="42" height="48" viewBox="0 0 42 48"><ellipse cx="20" cy="45.500" rx="15" ry="1.800" fill="url(#gShadow)" opacity=".6"/>
<rect x="2.300" y="6.800" width="35.400" height="36.500" rx="1.500" fill="#d9b983" stroke="#c6a46c" stroke-width="1.400"/>
<path d="M8 10.500 H32.500 V32 L25.500 39 H8 Z" fill="#f2f2f2" stroke="#bebebe" stroke-width="1.300"/>
<path d="M32.500 32 L25.500 32 L25.500 39 Z" fill="#fafafa" stroke="#c4c4c4" stroke-width="1"/>
<path d="M12.500 2.200 H27.500 L29.500 6 V10 H10.500 V6 Z" fill="#c9c9c1" stroke="#b0b0a8" stroke-width="1.200" stroke-linejoin="round"/>
<path d="M12 18 H28 M12 22 H28 M12 26 H22" stroke="#c8c8c8" stroke-width="1.800"/></svg><svg style="left:730px;top:59px;" width="44" height="48" viewBox="0 0 44 48"><path d="M3 5 H36.500 V37 L28 45.500 H3 Z" fill="url(#gPaper)" stroke="#8c8c88" stroke-width="1.500"/>
<path d="M36.500 37 L24 40.500 L28 45.500 Z" fill="#fff" stroke="#9c9c98" stroke-width="1"/>
<path d="M11.140 30.920 L34.270 4.670 L40.570 10.230 L17.440 36.480 Z" fill="#f2c218"/>
<path d="M15.340 34.630 L38.470 8.380 M13.240 32.780 L36.370 6.530" stroke="#1a1a1a" stroke-width="1.700"/>
<path d="M11.800 30.400 L34.800 4.300" stroke="#f8dc60" stroke-width="1.200"/>
<path d="M9 39.700 L11.140 30.920 L17.440 36.480 Z" fill="#e6c48c"/>
<path d="M9 39.700 L9.780 36.390 L12.180 38.510 Z" fill="#111"/>
<path d="M37.750 7.080 L39.740 4.830" stroke="#dc2020" stroke-width="8.400" stroke-linecap="round"/>
<path d="M35 5.300 L40 9.700" stroke="#c89a10" stroke-width="1.200"/></svg><svg style="left:824px;top:61px;" width="44" height="46" viewBox="0 0 44 46"><rect x="2.800" y="2.800" width="29" height="35" fill="#f6f6f6" stroke="#8b8b87" stroke-width="1.600"/>
<rect x="4.400" y="4.400" width="25.800" height="31.800" fill="none" stroke="#fff" stroke-width="1.200"/>
<path d="M8 10.500 H26 M8 15 H26 M8 19.500 H16" stroke="#c4c4c4" stroke-width="1.800"/>
<path d="M33.500 37 L40.200 43.200" stroke="#8a8a8a" stroke-width="4.400" stroke-linecap="round"/>
<path d="M34.500 38 L39.700 42.800" stroke="#d6d6d6" stroke-width="1.600" stroke-linecap="round"/>
<circle cx="24.200" cy="27.700" r="13" fill="#e4e4e4" stroke="#8e8e8e" stroke-width="1.500"/>
<circle cx="24.200" cy="27.700" r="10.200" fill="url(#gLens)" stroke="#6fa0de" stroke-width="1.500"/></svg><svg style="left:912px;top:61px;" width="44" height="40" viewBox="0 0 44 40"><rect x="2.500" y="6.500" width="15.500" height="23" fill="#cfcfcf" stroke="#b4b4b4" stroke-width="1.200"/>
<rect x="3.500" y="9.500" width="13.500" height="4.800" fill="#fff"/>
<path d="M3.500 18 H17 M3.500 22 H17 M3.500 26 H17" stroke="#c8c8c8" stroke-width="2"/>
<rect x="20.500" y="2.500" width="16" height="23" fill="#d2d2d2" stroke="#b8b8b8" stroke-width="1.200"/>
<rect x="21.500" y="5.500" width="14" height="4.800" fill="#fff"/>
<rect x="24.500" y="15.500" width="16" height="21.500" fill="#cdcdcd" stroke="#b0b0b0" stroke-width="1.200"/>
<rect x="25.500" y="18.500" width="14" height="4.800" fill="#fff"/>
<rect x="25.500" y="33" width="14" height="3.200" fill="#fff"/>
<path d="M25.500 27 H39.500 M25.500 30.500 H39.500" stroke="#c6c6c6" stroke-width="1.800"/>
<path d="M4 28.800 H15.500 V26 L22.500 31.300 L15.500 36.600 V34 H4 Z" fill="#3a55c0" stroke="#5a70cc" stroke-width=".800"/></svg><svg style="left:1002px;top:63px;" width="50" height="42" viewBox="0 0 50 42"><ellipse cx="24" cy="38.500" rx="20" ry="2" fill="url(#gShadow)" opacity=".7"/>
<rect x="2.900" y="2.800" width="43" height="33" fill="#f2f2f2" stroke="#8b8b87" stroke-width="1.600"/>
<rect x="6.400" y="6.200" width="36" height="26" fill="url(#gSky)" stroke="#1c2f66" stroke-width="1"/>
<circle cx="14.500" cy="13.500" r="4.800" fill="url(#gGlow)"/>
<path d="M29.500 22 L32.500 16.500 L34 19 L35.800 14 L38.200 22 Z" fill="#38425a"/>
<path d="M36.500 31.800 L42 26.500 V31.800 Z" fill="#cfcfcf" stroke="#9a9a9a" stroke-width=".8"/></svg><svg style="left:1147px;top:60px;" width="46" height="46" viewBox="0 0 46 46"><g fill="none" stroke="#5c70ae" stroke-linecap="butt">
<circle cx="23" cy="7.400" r="4.300" stroke-width="2.800"/>
<path d="M23 11.500 V41" stroke-width="4.600"/>
<path d="M7 15.200 H39" stroke-width="3.800"/>
<path d="M4.500 25.500 C8.500 37 17 40.500 23 40.500 C29 40.500 37.500 37 41.500 25.500" stroke-width="3.800"/>
</g><path d="M2.400 23.500 L8.800 24.500 L4.200 31 Z M43.600 23.500 L37.200 24.500 L41.800 31 Z" fill="#5c70ae"/></svg><svg style="left:1219px;top:72px;" width="46" height="22" viewBox="0 0 46 22"><g fill="none" stroke="#3444a0" stroke-width="3.700">
<rect x="4.700" y="4.600" width="23.600" height="12.200" rx="6.100"/>
<rect x="18.200" y="4.600" width="23.100" height="12.200" rx="6.100"/></g>
<path d="M20.800 14 L25.800 7.600" stroke="#9aa4d0" stroke-width="1.600"/></svg><svg style="left:1310px;top:70px;" width="42" height="28" viewBox="0 0 42 28"><path d="M3.200 13.800 L14.500 3.800 V8.500 H38 V19.500 H14.500 V24 Z" fill="#eaea7c" stroke="#d8d4a0" stroke-width="1.200" stroke-linejoin="round"/>
<path d="M6 13.500 L13.500 7 V10 H37 V13.500 Z" fill="#f4f4a8" opacity=".7"/></svg><svg style="left:1402px;top:64px;" width="42" height="44" viewBox="0 0 42 44"><ellipse cx="21" cy="40.200" rx="15" ry="2.400" fill="url(#gShadow)"/>
<path d="M2.900 5.200 H39.100 V36.800 C33 36.400 26 36.900 21 39.400 C16 36.900 9 36.400 2.900 36.800 Z" fill="#d4d4ce" stroke="#868686" stroke-width="1.500"/>
<path d="M2.900 36.800 C9 36.400 16 36.900 21 39.400 C26 36.900 33 36.400 39.100 36.800" fill="none" stroke="#55554f" stroke-width="1.600"/>
<path d="M5.600 3.400 C11 2.600 17 2.600 21 3.600 C25 2.600 31 2.600 36.400 3.400 V35 C31 34.400 25 35 21 37.200 C17 35 11 34.400 5.600 35 Z" fill="#ffffff" stroke="#c4c4bc" stroke-width=".800"/>
<path d="M8.300 4 V34.300 M33.700 4 V34.300" stroke="#e6e2d0" stroke-width="2"/><path d="M11.500 3.600 V34.200 M30.500 3.600 V34.200" stroke="#f0eee2" stroke-width="1.400"/><circle cx="20.300" cy="6.100" r="3.600" fill="#5a0a4e"/><path d="M16.500 13.500 H24.300 V30.500 H28.400 V33 H12.200 V30.500 H16.500 Z" fill="#5a0a4e"/></svg><svg style="left:1474px;top:64px;" width="42" height="44" viewBox="0 0 42 44"><ellipse cx="21" cy="40.200" rx="15" ry="2.400" fill="url(#gShadow)"/>
<path d="M2.900 5.200 H39.100 V36.800 C33 36.400 26 36.900 21 39.400 C16 36.900 9 36.400 2.900 36.800 Z" fill="#d4d4ce" stroke="#868686" stroke-width="1.500"/>
<path d="M2.900 36.800 C9 36.400 16 36.900 21 39.400 C26 36.900 33 36.400 39.100 36.800" fill="none" stroke="#55554f" stroke-width="1.600"/>
<path d="M5.600 3.400 C11 2.600 17 2.600 21 3.600 C25 2.600 31 2.600 36.400 3.400 V35 C31 34.400 25 35 21 37.200 C17 35 11 34.400 5.600 35 Z" fill="#ffffff" stroke="#c4c4bc" stroke-width=".800"/>
<path d="M8.300 4 V34.300 M33.700 4 V34.300" stroke="#e6e2d0" stroke-width="2"/><path d="M11.500 3.600 V34.200 M30.500 3.600 V34.200" stroke="#f0eee2" stroke-width="1.400"/><path d="M10 13 H30.500 M10 21.200 H30.500 M10 29.300 H30.500" stroke="#5a0a4e" stroke-width="4"/></svg><div class="t" style='left:1547.00px;top:63.00px;font-size:19.5px;line-height:19.5px;color:#111;letter-spacing:2.950px;'>abc</div><svg style="left:1548px;top:78px;" width="36" height="30" viewBox="0 0 36 30"><ellipse cx="17" cy="26.800" rx="13" ry="1.600" fill="url(#gShadow)" opacity=".6"/>
<path d="M8 15.300 L16.800 22.900 L27.500 4" fill="none" stroke="#86d64e" stroke-width="5.200" stroke-linejoin="round" stroke-linecap="butt"/>
<path d="M9 14.600 L16.500 20.800 L26.500 3.800" fill="none" stroke="#b4ec88" stroke-width="1.400" opacity=".8"/></svg><svg style="left:1633px;top:59px;" width="48" height="48" viewBox="0 0 48 48"><path d="M7.200 8.200 H19.200 V3.700 Q19.200 2.200 20.700 2.200 H29.300 Q30.800 2.200 30.800 3.700 V8.200 H45 V20 H40.500 Q39 20 39 21.500 V30.200 Q39 31.700 40.500 31.700 H45 V46 H7.200 V33.600 H2.700 Q1.200 33.600 1.200 32.100 V21.800 Q1.200 20.300 2.700 20.300 H7.200 Z" fill="url(#gYel)"/>
<path d="M7.700 33.600 V46 M7.700 20.300 V8.700 H19.700 V3.700 Q19.700 2.700 20.700 2.700 H29.300 Q30.300 2.700 30.300 3.700 M30.800 8.700 H45 M1.700 32.100 V21.800 Q1.700 20.800 2.700 20.800 H7.200" fill="none" stroke="#a89a38" stroke-width="1" opacity=".8"/></svg><svg style="left:1849px;top:59px;" width="48" height="48" viewBox="0 0 48 48"><path d="M7.200 8.200 H19.200 V3.700 Q19.200 2.200 20.700 2.200 H29.300 Q30.800 2.200 30.800 3.700 V8.200 H45 V20 H40.500 Q39 20 39 21.500 V30.200 Q39 31.700 40.500 31.700 H45 V46 H7.200 V33.600 H2.700 Q1.200 33.600 1.200 32.100 V21.800 Q1.200 20.300 2.700 20.300 H7.200 Z" fill="url(#gGrn)"/>
<path d="M7.700 33.600 V46 M7.700 20.300 V8.700 H19.700 V3.700 Q19.700 2.700 20.700 2.700 H29.300 Q30.300 2.700 30.300 3.700 M30.800 8.700 H45 M1.700 32.100 V21.800 Q1.700 20.800 2.700 20.800 H7.200" fill="none" stroke="#5a9a28" stroke-width="1" opacity=".8"/></svg><svg style="left:1921px;top:59px;" width="48" height="48" viewBox="0 0 48 48"><path d="M7.200 8.200 H19.200 V3.700 Q19.200 2.200 20.700 2.200 H29.300 Q30.800 2.200 30.800 3.700 V8.200 H45 V20 H40.500 Q39 20 39 21.500 V30.200 Q39 31.700 40.500 31.700 H45 V46 H7.200 V33.600 H2.700 Q1.200 33.600 1.200 32.100 V21.800 Q1.200 20.300 2.700 20.300 H7.200 Z" fill="url(#gBlu)"/>
<path d="M7.700 33.600 V46 M7.700 20.300 V8.700 H19.700 V3.700 Q19.700 2.700 20.700 2.700 H29.300 Q30.300 2.700 30.300 3.700 M30.800 8.700 H45 M1.700 32.100 V21.800 Q1.700 20.800 2.700 20.800 H7.200" fill="none" stroke="#4a6e9c" stroke-width="1" opacity=".8"/></svg><div class="t" style='left:1653.20px;top:77.00px;font-size:21px;line-height:21px;color:#fffef0;font-family:"Liberation Mono","DejaVu Sans Mono",monospace;'>1</div><div class="t" style='left:1867.60px;top:77.00px;font-size:21px;line-height:21px;color:#b8e890;font-family:"Liberation Mono","DejaVu Sans Mono",monospace;opacity:.85;'>4</div><div class="t" style='left:1940.60px;top:77.00px;font-size:21px;line-height:21px;color:#d4e2f4;font-family:"Liberation Mono","DejaVu Sans Mono",monospace;'>5</div><svg style="left:1707px;top:60px;" width="44" height="44" viewBox="0 0 44 44"><rect x="1.300" y="1.600" width="40" height="41" rx="3" fill="url(#gWr)" stroke="#7683b2" stroke-width="1"/>
<g transform="rotate(-45 21 22.500)"><path d="M18.400 8.200 V13.700 H23.600 V8.200 C27 9.400 28.600 12.200 28.200 15.200 C27.800 17.800 26 19.600 23.800 20.400 V35.700 C23.800 37.400 22.600 38.400 21 38.400 C19.400 38.400 18.200 37.400 18.200 35.700 V20.400 C16 19.600 14.200 17.800 13.800 15.200 C13.400 12.200 15 9.400 18.400 8.200 Z" fill="#8fa6e0" fill-opacity=".75" stroke="#eef2fc" stroke-width="1.500" stroke-linejoin="round"/></g></svg><svg style="left:1778px;top:60px;" width="46" height="46" viewBox="0 0 46 46"><rect x="9.900" y="10.700" width="23.200" height="23.200" transform="rotate(45 21.500 22.300)" fill="none" stroke="#78d052" stroke-width="6"/>
<path d="M13.900 26.300 L21.500 33 L36.800 16.400" fill="none" stroke="#0c0c0c" stroke-width="6.200"/></svg><div class="t" style='left:1076.50px;top:53.00px;font-size:59px;line-height:59px;color:#626262;font-family:"Liberation Serif","DejaVu Serif",serif;'>Ω</div><svg style="left:565px;top:128px;" width="42" height="48" viewBox="0 0 42 48"><ellipse cx="21.0" cy="43.400" rx="17.0" ry="2.200" fill="url(#gShadow)"/>
<rect x="2" y="2.200" width="37.7" height="39.600" fill="url(#gPaper)" stroke="#8a8a82" stroke-width="2"/>
<rect x="3.800" y="4" width="34.1" height="36" fill="none" stroke="#fff" stroke-width="1.500"/><path d="M7.2 10 H31" stroke="#8b8b8b" stroke-width="2"/><path d="M7.2 16 H28.8" stroke="#8b8b8b" stroke-width="2"/><path d="M7.2 22 H27" stroke="#8b8b8b" stroke-width="2"/><path d="M7.2 28 H31" stroke="#8b8b8b" stroke-width="2"/><path d="M7.2 34 H21" stroke="#8b8b8b" stroke-width="2"/></svg><svg style="left:637px;top:128px;" width="42" height="48" viewBox="0 0 42 48"><ellipse cx="21.0" cy="43.400" rx="17.0" ry="2.200" fill="url(#gShadow)"/>
<rect x="2" y="2.200" width="37.7" height="39.600" fill="url(#gPaper)" stroke="#8a8a82" stroke-width="2"/>
<rect x="3.800" y="4" width="34.1" height="36" fill="none" stroke="#fff" stroke-width="1.500"/><path d="M9 10 H33" stroke="#8b8b8b" stroke-width="2"/><path d="M11.2 16 H30.9" stroke="#8b8b8b" stroke-width="2"/><path d="M13.1 22 H29" stroke="#8b8b8b" stroke-width="2"/><path d="M9 28 H33" stroke="#8b8b8b" stroke-width="2"/><path d="M13.1 34 H29" stroke="#8b8b8b" stroke-width="2"/></svg><svg style="left:709px;top:128px;" width="42" height="48" viewBox="0 0 42 48"><ellipse cx="21.0" cy="43.400" rx="17.0" ry="2.200" fill="url(#gShadow)"/>
<rect x="2" y="2.200" width="37.7" height="39.600" fill="url(#gPaper)" stroke="#8a8a82" stroke-width="2"/>
<rect x="3.800" y="4" width="34.1" height="36" fill="none" stroke="#fff" stroke-width="1.500"/><path d="M11 10 H35" stroke="#8b8b8b" stroke-width="2"/><path d="M13.1 16 H35" stroke="#8b8b8b" stroke-width="2"/><path d="M15.2 22 H35" stroke="#8b8b8b" stroke-width="2"/><path d="M11 28 H35" stroke="#8b8b8b" stroke-width="2"/><path d="M21.1 34 H35" stroke="#8b8b8b" stroke-width="2"/></svg><svg style="left:781px;top:128px;" width="42" height="48" viewBox="0 0 42 48"><ellipse cx="21.0" cy="43.400" rx="17.0" ry="2.200" fill="url(#gShadow)"/>
<rect x="2" y="2.200" width="37.7" height="39.600" fill="url(#gPaper)" stroke="#8a8a82" stroke-width="2"/>
<rect x="3.800" y="4" width="34.1" height="36" fill="none" stroke="#fff" stroke-width="1.500"/><path d="M7.2 10 H35" stroke="#8b8b8b" stroke-width="2"/><path d="M7.2 16 H35" stroke="#8b8b8b" stroke-width="2"/><path d="M7.2 22 H35" stroke="#8b8b8b" stroke-width="2"/><path d="M7.2 28 H35" stroke="#8b8b8b" stroke-width="2"/><path d="M7.2 34 H35" stroke="#8b8b8b" stroke-width="2"/></svg><svg style="left:871.4px;top:128px;" width="42" height="48" viewBox="0 0 42 48"><ellipse cx="21.0" cy="43.400" rx="17.0" ry="2.200" fill="url(#gShadow)"/>
<rect x="2" y="2.200" width="37.7" height="39.600" fill="url(#gPaper)" stroke="#8a8a82" stroke-width="2"/>
<rect x="3.800" y="4" width="34.1" height="36" fill="none" stroke="#fff" stroke-width="1.500"/><rect x="6.800" y="9" width="6" height="6" fill="#5c5c5c"/><path d="M15 12 H32.600" stroke="#8b8b8b" stroke-width="1.800"/><rect x="6.800" y="19" width="6" height="6" fill="#5c5c5c"/><path d="M15 22 H32.600" stroke="#8b8b8b" stroke-width="1.800"/><rect x="6.800" y="29.200000000000003" width="6" height="6" fill="#5c5c5c"/><path d="M15 32.2 H32.600" stroke="#8b8b8b" stroke-width="1.800"/></svg><svg style="left:943.4px;top:128px;" width="42" height="48" viewBox="0 0 42 48"><ellipse cx="21.0" cy="43.400" rx="17.0" ry="2.200" fill="url(#gShadow)"/>
<rect x="2" y="2.200" width="37.7" height="39.600" fill="url(#gPaper)" stroke="#8a8a82" stroke-width="2"/>
<rect x="3.800" y="4" width="34.1" height="36" fill="none" stroke="#fff" stroke-width="1.500"/><path d="M15 12 H32.600" stroke="#8b8b8b" stroke-width="1.800"/><path d="M15 22 H32.600" stroke="#8b8b8b" stroke-width="1.800"/><path d="M15 32.2 H32.600" stroke="#8b8b8b" stroke-width="1.800"/></svg><div class="t" style='left:949.30px;top:134.00px;font-size:12.5px;line-height:12.5px;color:#3c3c3c;font-family:"Liberation Mono","DejaVu Sans Mono",monospace;font-weight:bold;'>1</div><div class="t" style='left:949.30px;top:144.00px;font-size:12.5px;line-height:12.5px;color:#3c3c3c;font-family:"Liberation Mono","DejaVu Sans Mono",monospace;font-weight:bold;'>2</div><div class="t" style='left:948.30px;top:156.00px;font-size:12.5px;line-height:12.5px;color:#3c3c3c;font-family:"Liberation Mono","DejaVu Sans Mono",monospace;font-weight:bold;'>3</div><svg style="left:1033.3px;top:128px;" width="42" height="48" viewBox="0 0 42 48"><ellipse cx="21.0" cy="43.400" rx="17.0" ry="2.200" fill="url(#gShadow)"/>
<rect x="2" y="2.200" width="37.7" height="39.600" fill="url(#gPaper)" stroke="#8a8a82" stroke-width="2"/>
<rect x="3.800" y="4" width="34.1" height="36" fill="none" stroke="#fff" stroke-width="1.500"/><path d="M8.600 8.200 H20.700 M8.600 12.100 H24.600 M8.600 16.200 H20.700" stroke="#8b8b8b" stroke-width="1.800"/><path d="M20.500 23.200 H33 V33 H20.500 Z" fill="url(#gFadeL)"/><path d="M8.400 28.200 L20.600 19 V37.400 Z" fill="#555650"/></svg><svg style="left:1105.3px;top:128px;" width="42" height="48" viewBox="0 0 42 48"><ellipse cx="21.0" cy="43.400" rx="17.0" ry="2.200" fill="url(#gShadow)"/>
<rect x="2" y="2.200" width="37.7" height="39.600" fill="url(#gPaper)" stroke="#8a8a82" stroke-width="2"/>
<rect x="3.800" y="4" width="34.1" height="36" fill="none" stroke="#fff" stroke-width="1.500"/><path d="M18.700 8.200 H30.700 M18.700 12.100 H34.700 M18.700 16.200 H30.700" stroke="#8b8b8b" stroke-width="1.800"/><path d="M7 23.200 H21 V33 H7 Z" fill="url(#gFadeR)"/><path d="M31.200 28.200 L19 19 V37.400 Z" fill="#555650"/></svg><svg style="left:25px;top:128px;" width="54" height="54" viewBox="0 0 54 54"><ellipse cx="21" cy="43.600" rx="17" ry="2.200" fill="url(#gShadow)"/>
<rect x="2.200" y="2.300" width="37.800" height="39.400" fill="url(#gPaper)" stroke="#8a8a80" stroke-width="2"/>
<rect x="4" y="4.100" width="34.200" height="35.800" fill="none" stroke="#fff" stroke-width="1.500"/>
<path d="M21.800 16.500 H33.800 M27.800 13.200 V25 M23.500 14.500 L32.200 23.500 M32.200 14.500 L23.500 23.500" stroke="#6e8698" stroke-width="1.500"/>
<path d="M34.200 43.800 L40.600 49 L48.400 40.800" fill="none" stroke="#111" stroke-width="2.600"/></svg><div class="t" style='left:29.80px;top:140.00px;font-size:22.5px;line-height:22.5px;color:#2a4358;font-family:"DejaVu Sans","Liberation Sans",sans-serif;font-weight:bold;'>h</div><div class="t" style='left:122.60px;top:131.00px;font-size:36px;line-height:36px;color:#2b55a2;font-family:"Liberation Serif","DejaVu Serif",serif;font-weight:bold;'>A</div><div class="t" style='left:196.60px;top:132.00px;font-size:35px;line-height:35px;color:#4a6cb0;font-family:"Liberation Serif","DejaVu Serif",serif;font-style:italic;'>A</div><div class="t" style='left:266.20px;top:129.00px;font-size:38.5px;line-height:38.5px;color:#3a5fa8;font-family:"Liberation Serif","DejaVu Serif",serif;'>A</div><div style="left:264.5px;top:162.8px;width:28.5px;height:2.2px;background:#3a5fa8"></div><div class="t" style='left:337.50px;top:128.00px;font-size:38.5px;line-height:38.5px;color:#3a5fa8;font-family:"Liberation Serif","DejaVu Serif",serif;'>A</div><div style="left:336px;top:145.2px;width:29.5px;height:2.4px;background:#2b55a2"></div><div class="t" style='left:406.80px;top:128.00px;font-size:38.5px;line-height:38.5px;color:#3a5fa8;font-family:"Liberation Serif","DejaVu Serif",serif;'>A</div><div class="t" style='left:433.00px;top:151.00px;font-size:20px;line-height:20px;color:#3a5fa8;font-family:"Liberation Serif","DejaVu Serif",serif;'>2</div><div class="t" style='left:482.40px;top:133.00px;font-size:38.5px;line-height:38.5px;color:#3a5fa8;font-family:"Liberation Serif","DejaVu Serif",serif;'>A</div><div class="t" style='left:503.20px;top:126.00px;font-size:19.5px;line-height:19.5px;color:#3a5fa8;font-family:"Liberation Serif","DejaVu Serif",serif;'>2</div><svg style="left:-6.1px;top:191px;" width="28" height="28" viewBox="0 0 28 28"><circle cx="14" cy="14" r="13.300" fill="#4c4c4c"/><circle cx="14" cy="14" r="13.300" fill="none" stroke="#6a6a6a" stroke-width="1.200" opacity=".6"/><path d="M8.400 8.400 L19.600 19.600 M19.600 8.400 L8.400 19.600" stroke="#fff" stroke-width="4.400"/></svg><svg style="left:29.9px;top:191px;" width="28" height="28" viewBox="0 0 28 28"><circle cx="14" cy="14" r="13.300" fill="#4c4c4c"/><circle cx="14" cy="14" r="13.300" fill="none" stroke="#6a6a6a" stroke-width="1.200" opacity=".6"/><path d="M10.900 13.600 V9.800 H20.900 V16.600 H17.400" fill="none" stroke="#fff" stroke-width="1.700"/><rect x="7.100" y="14.800" width="8.600" height="6" fill="none" stroke="#fff" stroke-width="2"/></svg><svg style="left:1490px;top:191px;" width="28" height="28" viewBox="0 0 28 28"><circle cx="14" cy="14" r="13.300" fill="#4c4c4c"/><circle cx="14" cy="14" r="13.300" fill="none" stroke="#6a6a6a" stroke-width="1.200" opacity=".6"/><path d="M8.400 8.400 L19.600 19.600 M19.600 8.400 L8.400 19.600" stroke="#fff" stroke-width="4.400"/></svg><svg style="left:1526px;top:191px;" width="28" height="28" viewBox="0 0 28 28"><circle cx="14" cy="14" r="13.300" fill="#4c4c4c"/><circle cx="14" cy="14" r="13.300" fill="none" stroke="#6a6a6a" stroke-width="1.200" opacity=".6"/><path d="M10.900 13.600 V9.800 H20.900 V16.600 H17.400" fill="none" stroke="#fff" stroke-width="1.700"/><rect x="7.100" y="14.800" width="8.600" height="6" fill="none" stroke="#fff" stroke-width="2"/></svg><svg width="0" height="0" style="left:0;top:0"><defs><linearGradient id="gFoldO" x1="0" y1="0" x2="0" y2="1"><stop offset="0" stop-color="#58a8dc"/><stop offset=".5" stop-color="#64b8e8"/><stop offset="1" stop-color="#72c8f4"/></linearGradient><linearGradient id="gFile" x1="0" y1="0" x2="0" y2="1"><stop offset="0" stop-color="#ececec"/><stop offset=".35" stop-color="#ffffff"/></linearGradient></defs></svg><svg style="left:21px;top:238px;" width="34" height="27" viewBox="0 0 34 27"><path d="M1 3 C1 1.800 1.800 1 3 1 H9.200 L11 3.400 H30.500 C31.700 3.400 32.500 4.200 32.500 5.400 V22.500 C32.500 23.700 31.700 24.500 30.500 24.500 H3 C1.800 24.500 1 23.700 1 22.500 Z" fill="#93d4f8"/><path d="M1 9.200 H32.500 V22.500 C32.500 23.700 31.700 24.500 30.500 24.500 H3 C1.800 24.500 1 23.700 1 22.500 Z" fill="url(#gFoldO)"/></svg><svg style="left:21px;top:318px;" width="34" height="27" viewBox="0 0 34 27"><path d="M1 3 C1 1.800 1.800 1 3 1 H9.200 L11 3.400 H30.500 C31.700 3.400 32.500 4.200 32.500 5.400 V22.500 C32.500 23.700 31.700 24.500 30.500 24.500 H3 C1.800 24.500 1 23.700 1 22.500 Z" fill="url(#gFold)"/><path d="M1 4.200 H32.500" stroke="#a4dcfa" stroke-width="1" opacity=".7"/><path d="M1.500 24 H32" stroke="#4fa6dc" stroke-width="1" opacity=".6"/></svg><svg style="left:21px;top:358px;" width="34" height="27" viewBox="0 0 34 27"><path d="M1 3 C1 1.800 1.800 1 3 1 H9.200 L11 3.400 H30.500 C31.700 3.400 32.500 4.200 32.500 5.400 V22.500 C32.500 23.700 31.700 24.500 30.500 24.500 H3 C1.800 24.500 1 23.700 1 22.500 Z" fill="url(#gFold)"/><path d="M1 4.200 H32.500" stroke="#a4dcfa" stroke-width="1" opacity=".7"/><path d="M1.500 24 H32" stroke="#4fa6dc" stroke-width="1" opacity=".6"/></svg><svg style="left:21px;top:398px;" width="34" height="27" viewBox="0 0 34 27"><path d="M1 3 C1 1.800 1.800 1 3 1 H9.200 L11 3.400 H30.500 C31.700 3.400 32.500 4.200 32.500 5.400 V22.500 C32.500 23.700 31.700 24.500 30.500 24.500 H3 C1.800 24.500 1 23.700 1 22.500 Z" fill="url(#gFold)"/><path d="M1 4.200 H32.500" stroke="#a4dcfa" stroke-width="1" opacity=".7"/><path d="M1.500 24 H32" stroke="#4fa6dc" stroke-width="1" opacity=".6"/></svg><svg style="left:21px;top:438px;" width="34" height="27" viewBox="0 0 34 27"><path d="M1 3 C1 1.800 1.800 1 3 1 H9.200 L11 3.400 H30.500 C31.700 3.400 32.500 4.200 32.500 5.400 V22.500 C32.500 23.700 31.700 24.500 30.500 24.500 H3 C1.800 24.500 1 23.700 1 22.500 Z" fill="url(#gFold)"/><path d="M1 4.200 H32.500" stroke="#a4dcfa" stroke-width="1" opacity=".7"/><path d="M1.500 24 H32" stroke="#4fa6dc" stroke-width="1" opacity=".6"/></svg><svg style="left:21px;top:478px;" width="34" height="27" viewBox="0 0 34 27"><path d="M1 3 C1 1.800 1.800 1 3 1 H9.200 L11 3.400 H30.500 C31.700 3.400 32.500 4.200 32.500 5.400 V22.500 C32.500 23.700 31.700 24.500 30.500 24.500 H3 C1.800 24.500 1 23.700 1 22.500 Z" fill="url(#gFold)"/><path d="M1 4.200 H32.500" stroke="#a4dcfa" stroke-width="1" opacity=".7"/><path d="M1.500 24 H32" stroke="#4fa6dc" stroke-width="1" opacity=".6"/></svg><svg style="left:21px;top:518px;" width="34" height="27" viewBox="0 0 34 27"><path d="M1 3 C1 1.800 1.800 1 3 1 H9.200 L11 3.400 H30.500 C31.700 3.400 32.500 4.200 32.500 5.400 V22.500 C32.500 23.700 31.700 24.500 30.500 24.500 H3 C1.800 24.500 1 23.700 1 22.500 Z" fill="url(#gFold)"/><path d="M1 4.200 H32.500" stroke="#a4dcfa" stroke-width="1" opacity=".7"/><path d="M1.500 24 H32" stroke="#4fa6dc" stroke-width="1" opacity=".6"/></svg><svg style="left:3px;top:246px;" width="20" height="17" viewBox="0 0 20 17"><path d="M1.200 1.300 H18.200 L9.800 16 Z" fill="#8e8e8e"/></svg><svg style="left:26.2px;top:555.5px;" width="23.5" height="31" viewBox="0 0 23.5 31"><path d="M.800 .800 H14.0 L22.7 9.5 V30.2 H.800 Z" fill="url(#gFile)" stroke="#c9c9c9" stroke-width="1.400"/><path d="M14.0 .800 V9.5 H22.7" fill="#f6f6f6" stroke="#cfcfcf" stroke-width="1.200"/><path d="M1 30.3 H22.5" stroke="#b9b9b9" stroke-width="1.200"/></svg><svg style="left:26.2px;top:595.5px;" width="23.5" height="31" viewBox="0 0 23.5 31"><path d="M.800 .800 H14.0 L22.7 9.5 V30.2 H.800 Z" fill="url(#gFile)" stroke="#c9c9c9" stroke-width="1.400"/><path d="M14.0 .800 V9.5 H22.7" fill="#f6f6f6" stroke="#cfcfcf" stroke-width="1.200"/><path d="M1 30.3 H22.5" stroke="#b9b9b9" stroke-width="1.200"/></svg><svg style="left:47.5px;top:276.5px;" width="21" height="29.5" viewBox="0 0 21 29.5"><path d="M.400 .400 H12 L20.600 9 V29 H.400 Z" fill="#fff"/><path d="M.400 .400 H12 L20.600 9 V14 H.400 Z" fill="#f0f0f0" opacity=".8"/>
<path d="M12 .400 V9 H20.600 Z" fill="#e2e2e2"/>
<circle cx="9.400" cy="18" r="7" fill="#2f7ee8"/><circle cx="9.400" cy="18" r="5" fill="#4a98f4"/>
<path d="M5.800 21.600 L8.400 17 L10.400 19 Z" fill="#e8e8f0"/><path d="M13 14.400 L8.400 17 L10.400 19 Z" fill="#e84a3a"/>
<path d="M6 25.500 H13" stroke="#9a9aa0" stroke-width="1.200" opacity=".6"/></svg><svg style="left:344px;top:197px;" width="26" height="26" viewBox="0 0 26 26"><rect x="0" y="0" width="26" height="26" fill="#e07a52"/>
<path d="M2 0 H26 V2.600 H2.600 V26 H0 V2 H2 Z" fill="#dc2a18"/>
<path d="M3.200 4 H24 M3.800 4 V24" stroke="#eba48c" stroke-width="1.400"/>
<path d="M25.300 3 V24 M2 25.300 H24" stroke="#e8906c" stroke-width="1.400"/>
<rect x="23.400" y="23.400" width="2.600" height="2.600" fill="#dc3a22"/>
<path d="M8.200 8.400 L19.800 20 M19.800 8.400 L8.200 20" stroke="#fff" stroke-width="3.600"/>
<rect x="11.600" y="11.800" width="4.800" height="4.800" fill="#fff"/></svg><svg style="left:338px;top:1143px;" width="44" height="44" viewBox="0 0 44 44"><rect x=".800" y=".800" width="42.400" height="42.400" rx="4.500" fill="url(#gRedX)" stroke="#c85a5a" stroke-width="1.400"/>
<rect x="2" y="21" width="40" height="21" rx="3" fill="url(#gRedGlow)"/>
<path d="M10 9.500 L34 34.500 M34 9.500 L10 34.500" stroke="#e9e9e9" stroke-width="5.200"/></svg><svg style="left:344px;top:1331px;" width="32" height="32" viewBox="0 0 32 32"><rect x="1" y="1" width="30" height="30" rx="1.500" fill="#f8f8f8" stroke="#c2c2c2" stroke-width="2"/>
<path d="M8.500 15.200 L16 7.600 L23.500 15.200 M8.500 25.200 L16 17.600 L23.500 25.200" fill="none" stroke="#a9a9a9" stroke-width="3.600"/></svg><svg style="left:1497px;top:1320px;" width="48" height="50" viewBox="0 0 48 50"><g transform="translate(.500 -1) rotate(40 24 25) translate(24 25) scale(1.120) translate(-24 -25)" opacity=".95">
<rect x="20" y="2" width="8.500" height="26" rx="1.500" fill="#e9e9e9" stroke="#bdbdbd" stroke-width="1.300"/>
<path d="M22.200 4 V27 M24.300 4 V27 M26.400 4 V27" stroke="#c9c9c9" stroke-width=".900" stroke-dasharray="1.500 1.500"/>
<path d="M19 27 H29.500 L33 35 V42.500 C33 46 15.500 46 15.500 42.500 V35 Z" fill="#ececec" stroke="#b5b5b5" stroke-width="1.300"/>
<ellipse cx="24.300" cy="43" rx="8.600" ry="3.200" fill="#f4f4f4" stroke="#8f8f8f" stroke-width="1.300"/>
<path d="M15.800 36 H32.800" stroke="#a8a8a8" stroke-width="1.600"/></g></svg><svg style="left:1571px;top:1322px;" width="42" height="46" viewBox="0 0 42 46"><rect x="1.700" y="1.600" width="38" height="42.400" fill="#efefed" stroke="#bfbfbf" stroke-width="1.600"/>
<path d="M6.800 7 H35 V13 H31.500 V19.200 H29 V24 H33 V29.200 H26.500 V34.700 H6.800 Z" fill="#a9c5ea"/>
<rect x="6.800" y="9.300" width="10.200" height="9.400" fill="#7f9dc8"/>
<path d="M19 10.500 H33 M19 16.200 H30 M7 22 H27.500 M7 27 H31.500 M7 32 H24" stroke="#8fb0dc" stroke-width="1.700"/>
<rect x="23.600" y="27.500" width="3.200" height="9.500" fill="#9a9a9a"/></svg><svg style="left:1641px;top:1322px;" width="46" height="46" viewBox="0 0 46 46"><rect x="1.300" y="1.300" width="29.700" height="35" fill="#b5b5b5"/>
<path d="M6 13 H14 M6 18 H14 M6 23 H14" stroke="#a9a9a9" stroke-width="1.600"/>
<path d="M14 9.700 H42.800 V37 L35.500 44.300 H14 Z" fill="url(#gPaperD)" stroke="#bcbcbc" stroke-width="1.500"/>
<path d="M42.800 37 L35.500 37 L35.500 44.300 Z" fill="#cfcfcf" stroke="#b5b5b5" stroke-width="1"/>
<path d="M19 18.500 H38 M19 23.500 H35 M19 28.500 H38" stroke="#dadada" stroke-width="3"/></svg><svg style="left:1714px;top:1321px;" width="44" height="48" viewBox="0 0 44 48"><g stroke="#2f8a3c" stroke-width="1.400" stroke-linejoin="round">
<path d="M3 17.500 C3.500 11 9.500 8 17 8 H23.500 V2.500 L36.800 12.500 L23.500 21 V15.500 H17 C11.500 15.500 8.500 17.500 9.500 21.500 Z" fill="#56c83c"/>
<path d="M41 28.500 C40.500 35.500 34.500 39 27 39 H20.500 V45 L7 34.500 L20.500 26 V31.500 H27 C32.500 31.500 35.500 29.500 34.500 25 Z" fill="#56c83c"/></g>
<path d="M5.500 15 C7.500 11 12 10 17 10 H25 V6 L33 12 Z" fill="#b4f090" opacity=".75"/>
<path d="M9.500 34.500 L20 27.800 V33 H27 C31 33 34.500 32 36 29" fill="none" stroke="#b4f090" stroke-width="1.600" opacity=".8"/></svg><div style="left:1624.2px;top:1391.2px;width:51.5px;height:51px;border:2px solid #bababa;background:linear-gradient(#ebebeb,#f9f9f9)"></div><div style="left:1980.5px;top:1391.2px;width:51.5px;height:51px;border:2px solid #bababa;background:linear-gradient(#ebebeb,#f9f9f9)"></div><svg style="left:1636px;top:1411px;" width="30" height="12" viewBox="0 0 30 12"><rect x="2.900" y="2.700" width="22.600" height="6.600" fill="#8eabd8" stroke="#2b5bab" stroke-width="1.500"/><path d="M4.200 4.400 H24.200" stroke="#b9cdea" stroke-width="1.300"/></svg><svg style="left:1992px;top:1403px;" width="30" height="28" viewBox="0 0 30 28"><path d="M10.500 2.200 H17.400 V10 H25.800 V17.400 H17.400 V25.800 H10.500 V17.400 H2.400 V10 H10.500 Z" fill="#8eabd8" stroke="#2b5bab" stroke-width="1.500" stroke-linejoin="round"/><path d="M12 3.800 V11.500 H4 M12 18 V24" fill="none" stroke="#c2d3ec" stroke-width="1.300"/></svg><div style="left:1694px;top:1402px;width:268px;height:6.6px;border-radius:3.300px;background:#a9a9a9"></div><svg style="left:1810px;top:1391px;" width="36" height="38" viewBox="0 0 36 38"><path d="M2.800 8 C2.800 4.800 4.800 2.800 8 2.800 H28 C31.200 2.800 33.200 4.800 33.200 8 V20.500 L18 35.800 L2.800 20.500 Z" fill="#fff" stroke="#c2c2c2" stroke-width="1.300"/></svg><div style="left:1708.1000000000001px;top:1424.8px;width:1.6px;height:7.7px;background:#7f7f7f"></div><div style="left:1827.1000000000001px;top:1424.8px;width:1.6px;height:7.7px;background:#7f7f7f"></div><div style="left:1946.0px;top:1424.8px;width:1.6px;height:7.7px;background:#7f7f7f"></div></div></div>
</body>
</html>
